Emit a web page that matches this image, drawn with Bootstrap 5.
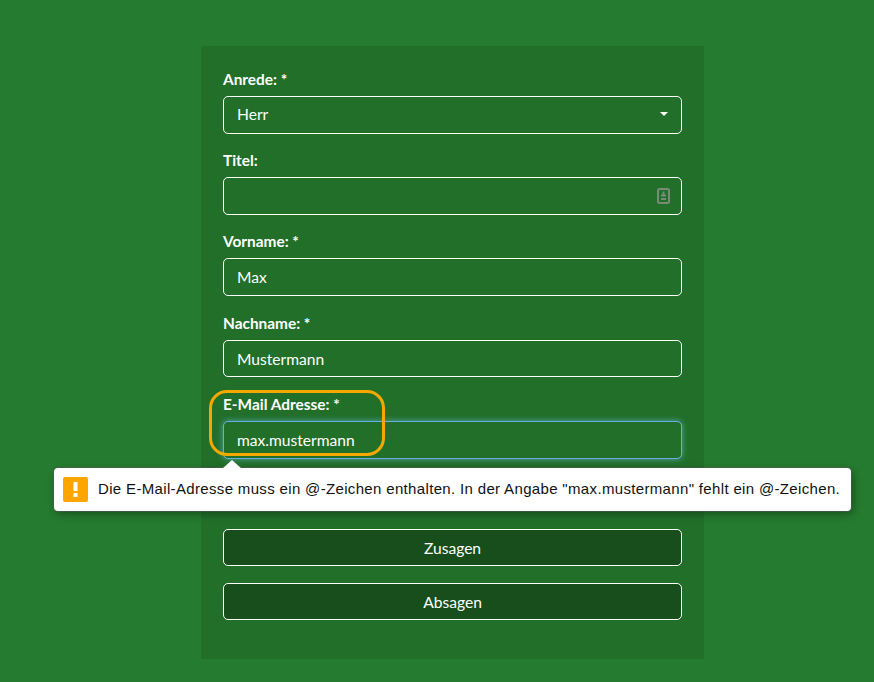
<!DOCTYPE html>
<html lang="de">
<head>
<meta charset="utf-8">
<title>Anmeldung</title>
<link href="https://cdn.jsdelivr.net/npm/bootstrap@5.3.0/dist/css/bootstrap.min.css" rel="stylesheet">
<style>
body { background: #257b2f; font-family: Lato, sans-serif; color: #fff; font-size: 16px; min-height: 682px; }
.panel-box { width: 503px; height: 613px; margin: 46px 0 0 201px; padding: 20.9px 22px 0; background: #216f29; position: relative; }
.field-wrap { position: relative; margin-bottom: 14.5px; }
.field-label { display: block; font-weight: 700; font-size: 15.4px; line-height: 24px; margin-bottom: 5px; color: #fff; }
.form-control.field-input, .form-select.field-input { background-color: #216f29; border: 1px solid #fff; color: #fff; height: 37.75px; border-radius: 5px; padding: 6px 13px; font-size: 15.6px; font-family: Lato, sans-serif; box-shadow: none; }
.form-select.field-input { background-image: none; }
.select-caret { position: absolute; right: 14px; top: 45px; width: 0; height: 0; border-left: 4.5px solid transparent; border-right: 4.5px solid transparent; border-top: 4.5px solid #fff; pointer-events: none; }
.key-icon { position: absolute; right: 12px; top: 40px; width: 13px; height: 16px; }
.form-control.email-focus { border-color: #66afe0; box-shadow: 0 0 6px rgba(120,190,235,.65); }
.annot-ring { position: absolute; left: 8px; top: 344px; width: 176px; height: 66px; border: 3px solid #f5a800; border-radius: 18px; pointer-events: none; }
.action-btn.btn { display: block; width: 100%; height: 37.5px; background: #174e1c; border: 1px solid #fff; color: #fff; border-radius: 5px; font-size: 15.6px; font-family: Lato, sans-serif; padding: 7px 12px 5px; margin-bottom: 16.5px; }
.action-group { margin-top: 70px; }
.hint-bubble { position: absolute; left: -147px; top: 422px; width: 797px; height: 43px; background: #fff; border-radius: 4px; box-shadow: 0 0 0 1px rgba(90,90,90,.55), 2px 3px 8px rgba(0,0,0,.35); color: #111; font-family: "Liberation Sans", sans-serif; font-size: 15px; letter-spacing: .34px; padding: 0 9px; gap: 10px; white-space: nowrap; }
.hint-tip { position: absolute; left: 169px; top: -8px; width: 0; height: 0; border-left: 9px solid transparent; border-right: 9px solid transparent; border-bottom: 8px solid #fff; }
.warn-square { width: 25px; height: 25px; background: #ffa500; border-radius: 2px; flex: none; }
</style>
</head>
<body>
<div class="panel-box">
  <form novalidate>
    <div class="field-wrap">
      <label class="field-label" for="anrede">Anrede: *</label>
      <select id="anrede" class="form-select field-input"><option>Herr</option></select>
      <span class="select-caret"></span>
    </div>
    <div class="field-wrap">
      <label class="field-label" for="titel">Titel:</label>
      <input id="titel" class="form-control field-input" type="text">
      <svg class="key-icon" viewBox="0 0 13 16" aria-hidden="true">
        <rect x="1" y="1" width="11" height="14" rx="1.5" fill="none" stroke="#788a7a" stroke-width="2"/>
        <path d="M5.5 3.5h2v3h1.5v2H4v-2h1.5z" fill="#788a7a"/>
        <rect x="4" y="10" width="5" height="2" fill="#788a7a"/>
      </svg>
    </div>
    <div class="field-wrap">
      <label class="field-label" for="vorname">Vorname: *</label>
      <input id="vorname" class="form-control field-input" type="text" value="Max">
    </div>
    <div class="field-wrap">
      <label class="field-label" for="nachname">Nachname: *</label>
      <input id="nachname" class="form-control field-input" type="text" value="Mustermann">
    </div>
    <div class="field-wrap mb-0">
      <label class="field-label" for="email">E-Mail Adresse: *</label>
      <input id="email" class="form-control field-input email-focus" type="text" value="max.mustermann">
    </div>
    <div class="action-group">
      <button type="button" class="btn action-btn">Zusagen</button>
      <button type="button" class="btn action-btn">Absagen</button>
    </div>
  </form>
  <div class="annot-ring"></div>
  <div class="hint-bubble d-flex align-items-center">
    <span class="hint-tip"></span>
    <span class="warn-square d-flex align-items-center justify-content-center">
      <svg width="5" height="15" viewBox="0 0 5 15" aria-hidden="true"><rect x="0.5" width="4" height="9" fill="#fff"/><rect x="0.5" y="11" width="4" height="4" fill="#fff"/></svg>
    </span>
    <span>Die E-Mail-Adresse muss ein @-Zeichen enthalten. In der Angabe "max.mustermann" fehlt ein @-Zeichen.</span>
  </div>
</div>
<script src="https://cdn.jsdelivr.net/npm/bootstrap@5.3.0/dist/js/bootstrap.bundle.min.js"></script>
</body>
</html>
